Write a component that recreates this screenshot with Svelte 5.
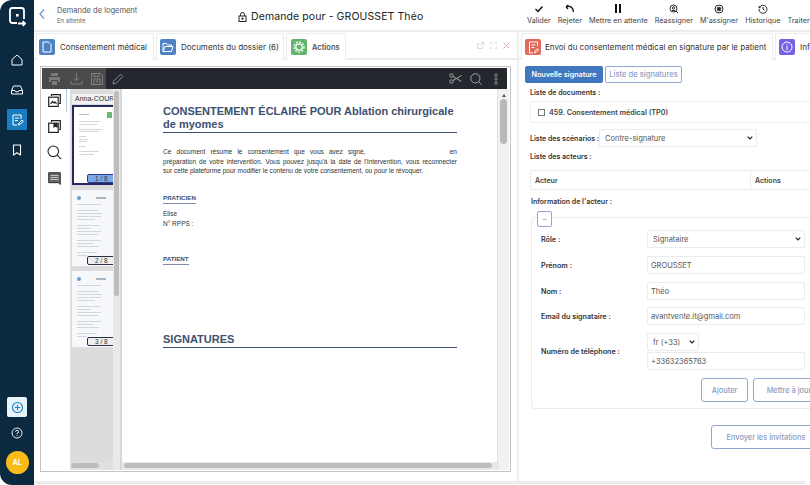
<script>
  const actions = [
    { label: 'Valider', icon: 'check' },
    { label: 'Rejeter', icon: 'undo' },
    { label: 'Mettre en attente', icon: 'pause' },
    { label: 'Réassigner', icon: 'search' },
    { label: "M'assigner", icon: 'target' },
    { label: 'Historique', icon: 'clock' },
    { label: 'Traiter', icon: 'none' }
  ];
  const firstLines = [70, 60, 0, 72, 68, 0, 22, 30, 26, 0, 24, 0, 68, 50];
  const lines = [70, 0, 62, 74, 70, 52, 0, 68, 40, 70, 62, 0, 72, 48, 66, 0, 58, 30];
  const thumbs = ['2 / 8', '3 / 8'];
</script>

<div class="app">
  <aside class="side">
    <div class="logo">
      <svg width="20" height="22" viewBox="0 0 20 22" fill="none" stroke="#fff" stroke-width="1.800"><path d="M10 17H5.500A2.500 2.500 0 0 1 3 14.500V4.500A2.500 2.500 0 0 1 5.500 2h9A2.500 2.500 0 0 1 17 4.500V13"/><path d="M11 17.500h7m-2.300-2.300 2.300 2.300-2.300 2.300"/><rect x="9" y="8" width="2.600" height="2.600" fill="#fff" stroke="none"/></svg>
    </div>
    <div class="nav">
      <span class="ni"><svg width="14" height="14" viewBox="0 0 14 14" fill="none" stroke="#fff" stroke-width="1"><path d="M2 6.500 7 2l5 4.500V12H2z" stroke-linejoin="round"/></svg></span>
      <span class="ni"><svg width="14" height="14" viewBox="0 0 14 14" fill="none" stroke="#fff" stroke-width="1"><path d="M3.500 3h7L12.500 7.500V11H1.500V7.500zM1.500 7.500h3.500l.8 1.300h2.400l.8-1.300h3.500" stroke-linejoin="round"/></svg></span>
      <span class="ni on"><svg width="13" height="14" viewBox="0 0 13 14" fill="none" stroke="#fff" stroke-width="1"><path d="M10 6V2H2v10h4M4 5h4M4 7.500h3"/><path d="m7.500 12 .5-2 3-3 1.300 1.300-3 3z"/></svg></span>
      <span class="ni"><svg width="12" height="14" viewBox="0 0 12 14" fill="none" stroke="#fff" stroke-width="1.100"><path d="M2.500 2h7v10L6 9.800 2.500 12z" stroke-linejoin="round"/></svg></span>
    </div>
    <div class="nav-bottom">
      <span class="plus"><svg width="13" height="13" viewBox="0 0 13 13" fill="none" stroke="#1c7fc0" stroke-width="1.100"><circle cx="6.500" cy="6.500" r="5"/><path d="M6.500 3.800v5.400M3.800 6.500h5.400"/></svg></span>
      <span class="help"><svg width="12" height="12" viewBox="0 0 12 12" fill="none" stroke="#fff" stroke-width=".9"><circle cx="6" cy="6" r="5"/><path d="M4.500 4.700A1.500 1.500 0 1 1 6 6.300v.8M6 8.200v.8"/></svg></span>
      <span class="avatar">AL</span>
    </div>
  </aside>

  <div class="main">
    <header class="top">
      <svg class="back" width="8" height="12" viewBox="0 0 8 12" fill="none" stroke="#6f9bd0" stroke-width="1.300"><path d="M6 1.500 2 6l4 4.500"/></svg>
      <div class="crumb">
        <div class="c1">Demande de logement</div>
        <div class="c2">En attente</div>
      </div>
      <div class="title">
        <svg width="9" height="10" viewBox="0 0 9 10" fill="none" stroke="#222" stroke-width="1"><rect x="1" y="4" width="7" height="5.500"/><path d="M2.500 4V2.500a2 2 0 0 1 4 0V4"/><circle cx="4.500" cy="6.700" r=".7" fill="#222"/></svg>
        <span>Demande pour - GROUSSET Théo</span>
      </div>
      <div class="acts">
        {#each actions as a}
          <div class="act">
            <span class="ai">
              {#if a.icon === 'check'}
                <svg width="10" height="8" viewBox="0 0 10 8" fill="none" stroke="#111" stroke-width="1.400"><path d="m1.500 4 2.500 2.500 4.500-5"/></svg>
              {:else if a.icon === 'undo'}
                <svg width="10" height="10" viewBox="0 0 10 10" fill="none" stroke="#111" stroke-width="1.200"><path d="M1.500 3c3-1.500 6.500-.5 7 5M1 2.800 3.300 1M1 2.800 3 5"/></svg>
              {:else if a.icon === 'pause'}
                <svg width="8" height="9" viewBox="0 0 8 9" fill="#111"><rect x="1" y="0" width="2" height="9"/><rect x="5" y="0" width="2" height="9"/></svg>
              {:else if a.icon === 'search'}
                <svg width="10" height="10" viewBox="0 0 10 10" fill="none" stroke="#111" stroke-width=".9"><circle cx="4.500" cy="4.500" r="3.500"/><circle cx="4.500" cy="4" r="1.200"/><path d="m7 7 2 2M3 6.500h3"/></svg>
              {:else if a.icon === 'target'}
                <svg width="10" height="10" viewBox="0 0 10 10" fill="none" stroke="#111" stroke-width=".9"><circle cx="5" cy="5" r="4"/><circle cx="5" cy="5" r="1.800"/><path d="m3.700 3.700 2.600 2.600m0-2.600L3.700 6.300"/></svg>
              {:else if a.icon === 'clock'}
                <svg width="10" height="10" viewBox="0 0 10 10" fill="none" stroke="#111" stroke-width=".9"><path d="M1.400 3.500A4 4 0 1 1 1 5M1 2v1.700h1.700M5 3v2.200l1.500.8"/></svg>
              {/if}
            </span>
            <span class="al">{a.label}</span>
          </div>
        {/each}
      </div>
    </header>

    <div class="panels">
      <section class="left">
        <div class="tabs">
          <div class="tab w1">
            <span class="ti blue"><svg width="10" height="12" viewBox="0 0 10 12" fill="none" stroke="#fff" stroke-width="1"><path d="M1 1h5.500L9 3.500V11H1z" stroke-linejoin="round"/></svg></span>
            <span>Consentement médical</span>
          </div>
          <div class="tab w2">
            <span class="ti blue"><svg width="12" height="11" viewBox="0 0 12 11" fill="none" stroke="#fff" stroke-width="1"><path d="M1 9.500V1.500h3.500l1 1.500h4v1.500M1 9.500 3 4.500h8L9.500 9.500z" stroke-linejoin="round"/></svg></span>
            <span>Documents du dossier (6)</span>
          </div>
          <div class="tab w3">
            <span class="ti green"><svg width="12" height="12" viewBox="0 0 12 12" fill="none" stroke="#fff" stroke-width="1.300"><circle cx="6" cy="6" r="3.200"/><circle cx="6" cy="6" r="5" stroke-dasharray="1.800 1.500"/></svg></span>
            <span class="b">Actions</span>
          </div>
          <div class="winctl">
            <svg width="7" height="7" viewBox="0 0 7 7" fill="none" stroke="#c6d3e6" stroke-width=".8"><path d="M5.500 4v2.500h-5v-5H3M4 .5h2.500V3M6.500.5 3.500 3.500"/></svg>
            <svg width="7" height="7" viewBox="0 0 7 7" fill="none" stroke="#d5dbe4" stroke-width=".8"><path d="M.5 2.500v-2h2M4.500.5h2v2M6.500 4.500v2h-2M2.500 6.500h-2v-2"/></svg>
            <svg width="7" height="7" viewBox="0 0 7 7" fill="none" stroke="#e9a8a8" stroke-width="1"><path d="m.5.500 6 6m0-6-6 6"/></svg>
          </div>
        </div>

        <div class="viewer">
          <div class="vbar">
            <div class="vgroup">
              <svg width="13" height="12" viewBox="0 0 13 12" fill="#7a7a7a"><path d="M3 0h7v3H3zM1 4h11v5h-2V7H3v2H1zM4 8h5v4H4z"/></svg>
              <svg width="13" height="12" viewBox="0 0 13 12" fill="none" stroke="#7d7d7d" stroke-width="1"><path d="M6.500 0v7.500M3.800 5l2.700 2.700L9.200 5M1 8v3h11V8"/></svg>
              <svg width="12" height="12" viewBox="0 0 12 12" fill="none" stroke="#808080" stroke-width="1"><path d="M.5.500h9l2 2v9H.500zM3 .5v3h5v-3"/><rect x="3" y="6" width="6" height="5.500"/><circle cx="6" cy="8.500" r=".8"/></svg>
            </div>
            <svg class="pen" width="12" height="12" viewBox="0 0 12 12" fill="none" stroke="#8b8b8f" stroke-width="1"><path d="M1 11l.7-3L8.500 1.200l2.300 2.300L4 10.300z" stroke-linejoin="round"/></svg>
            <div class="vright">
              <svg width="13" height="11" viewBox="0 0 13 11" fill="none" stroke="#aaa" stroke-width="1"><circle cx="2.500" cy="2.500" r="1.700"/><circle cx="2.500" cy="8.500" r="1.700"/><path d="M4 3.500 12.500 8.500M4 7.500 12.500 2.500"/></svg>
              <svg class="vs" width="12" height="12" viewBox="0 0 13 13" fill="none" stroke="#aaa" stroke-width="1"><circle cx="5.800" cy="5.800" r="5"/><path d="m9.500 9.500 3 3"/></svg>
              <svg class="vd" width="4" height="12" viewBox="0 0 4 12" fill="none" stroke="#8a8a8a" stroke-width="1"><circle cx="2" cy="2" r="1.200"/><circle cx="2" cy="6" r="1.200"/><circle cx="2" cy="10" r="1.200"/></svg>
            </div>
          </div>

          <div class="vbody">
            <div class="tools">
              <span class="mark"></span>
              <span class="tl"><svg width="13" height="13" viewBox="0 0 13 13" fill="none" stroke="#222" stroke-width="1.200"><path d="M3.500 2V.7h8.800v8.800H11"/><rect x=".7" y="3.200" width="9.500" height="9.200"/><path d="m2.500 10 2-2.500 1.500 1.500 1-1 1.500 2" /></svg></span>
              <span class="tl"><svg width="13" height="13" viewBox="0 0 13 13" fill="none" stroke="#222" stroke-width="1.200"><path d="M3.500 2V.7h8.800v8.800H11"/><rect x=".7" y="3.200" width="9.500" height="9.200"/><path d="M6 3.200v3.800l1.500-1 1.500 1V3.200" fill="#222"/></svg></span>
              <span class="tl"><svg width="15" height="15" viewBox="0 0 15 15" fill="none" stroke="#222" stroke-width="1.100"><circle cx="6.300" cy="6.300" r="5.300"/><path d="m10.200 10.200 4 4"/></svg></span>
              <span class="tl"><svg width="13" height="13" viewBox="0 0 13 13" fill="#666" stroke="#222" stroke-width=".9"><path d="M.7.700h11.600v11.800l-1.800-1.800H.7z"/><path d="M2.500 3.500h8M2.500 5.500h8M2.500 7.500h8" stroke="#ccc"/></svg></span>
            </div>

            <div class="thumbs">
              <div class="tscroll">
                <div class="tname">Anna-COUR</div>
                <div class="thumb first">
                  <div class="mhead"><em class="grey"></em><u class="gm"></u></div>
                  <div class="mini">
                    {#each firstLines as w}<i style="width:{w}%"></i>{/each}
                  </div>
                  <span class="pg active">1 / 8</span>
                </div>
                {#each thumbs as t}
                  <div class="thumb">
                    <div class="mhead"><em></em><u></u></div>
                    <div class="mini dense">
                      {#each lines as w}<i style="width:{w}%"></i>{/each}
                    </div>
                    <span class="pg">{t}</span>
                  </div>
                {/each}
              </div>
              <div class="tbar"><b></b></div>
              <div class="hbar"><b></b></div>
            </div>

            <div class="page">
              <div class="sheet">
                <h1>CONSENTEMENT ÉCLAIRÉ POUR Ablation chirurgicale de myomes</h1>
                <div class="para">
                  <span class="ln">Ce document résume le consentement que vous avez signé, <span class="gap"></span> en</span>
                  <span class="ln">préparation de votre intervention. Vous pouvez jusqu'à la date de l'intervention, vous reconnecter</span>
                  <span class="ln end">sur cette plateforme pour modifier le contenu de votre consentement, ou pour le révoquer.</span>
                </div>
                <h2 class="h-prat">PRATICIEN</h2>
                <p class="who">Elise<br />N° RPPS :</p>
                <h2 class="h-pat">PATIENT</h2>
                <h1 class="sig">SIGNATURES</h1>
              </div>
              <div class="hbar2"><b></b></div>
            </div>
            <div class="vscroll"><span class="up"></span><b></b></div>
          </div>
        </div>
      </section>

      <section class="right">
        <div class="tabs rtabs">
          <div class="tab w4">
            <span class="ti red"><svg width="11" height="13" viewBox="0 0 11 13" fill="none" stroke="#fff" stroke-width="1"><path d="M9.500 5V1h-8v11H5M3.500 4h4M3.500 6.500h3"/><path d="m6.500 12 .4-1.800 2.600-2.600 1.200 1.200-2.600 2.600z"/></svg></span>
            <span>Envoi du consentement médical en signature par le patient</span>
          </div>
          <div class="tab w5">
            <span class="ti violet"><svg width="12" height="12" viewBox="0 0 12 12" fill="none" stroke="#fff" stroke-width="1"><circle cx="6" cy="6" r="5"/><path d="M6 5v4M6 3v1"/></svg></span>
            <span>Informations</span>
          </div>
        </div>
        <div class="form">
          <div class="btnrow">
            <button class="primary">Nouvelle signature</button>
            <button class="outline">Liste de signatures</button>
          </div>
          <div class="lbl doclbl">Liste de documents :</div>
          <div class="docbox"><span class="cb"></span><span class="dn">459. Consentement médical (TP0)</span></div>
          <div class="scen">
            <span class="lbl">Liste des scénarios :</span>
            <div class="sel s-scen"><span>Contre-signature</span><svg width="6" height="4" viewBox="0 0 6 4" fill="none" stroke="#222" stroke-width="1.200"><path d="m.7.700 2.300 2.300L5.300.7"/></svg></div>
          </div>
          <div class="lbl actlbl">Liste des acteurs :</div>
          <div class="table"><span class="c-a">Acteur</span><span class="c-b">Actions</span></div>
          <div class="lbl infolbl">Information de l'acteur :</div>
          <div class="fs">
            <button class="toggle">–</button>
            <div class="row r1">
              <span class="rl">Rôle :</span>
              <div class="sel s-full"><span>Signataire</span><svg width="6" height="4" viewBox="0 0 6 4" fill="none" stroke="#222" stroke-width="1.200"><path d="m.7.700 2.300 2.300L5.300.7"/></svg></div>
            </div>
            <div class="row"><span class="rl">Prénom :</span><div class="inp">GROUSSET</div></div>
            <div class="row"><span class="rl">Nom :</span><div class="inp">Théo</div></div>
            <div class="row r-mail"><span class="rl">Email du signataire :</span><div class="inp">avantvente.it@gmail.com</div></div>
            <div class="row tel">
              <span class="rl">Numéro de téléphone :</span>
              <div class="telcol">
                <div class="sel s-tel"><span>fr (+33)</span><svg width="6" height="4" viewBox="0 0 6 4" fill="none" stroke="#222" stroke-width="1.200"><path d="m.7.700 2.300 2.300L5.300.7"/></svg></div>
                <div class="inp">+33632365763</div>
              </div>
            </div>
            <div class="fsbtns">
              <button class="ghost b-add">Ajouter</button>
              <button class="ghost b-upd">Mettre à jour</button>
            </div>
          </div>
          <div class="send"><button class="ghost b-send">Envoyer les invitations</button></div>
        </div>
      </section>
    </div>
    <div class="foot"></div>
  </div>
</div>

<style>
  :global(body) { margin: 0; background: #fff; }
  * { box-sizing: border-box; }
  .app {
    width: 810px; height: 485px; display: flex; overflow: hidden; background: #fff;
    font-family: Inter, "Noto Sans", sans-serif; color: #333;
  }
  .side {
    width: 34px; height: 485px; background: #0b2a3f; border-radius: 12px 0 0 12px;
    display: flex; flex-direction: column; align-items: center; flex: none;
  }
  .logo { margin-top: 6px; height: 22px; }
  .nav { margin-top: 21px; display: flex; flex-direction: column; gap: 9px; align-items: center; }
  .ni { width: 20px; height: 21px; display: flex; align-items: center; justify-content: center; }
  .ni.on { background: #1a7cc0; }
  .nav-bottom { margin-top: auto; margin-bottom: 12px; display: flex; flex-direction: column; align-items: center; }
  .plus { width: 20px; height: 20px; background: #e8f4fc; border-radius: 2px; display: flex; align-items: center; justify-content: center; }
  .help { margin-top: 10px; height: 12px; display: flex; }
  .avatar {
    margin-top: 12px; width: 23px; height: 23px; border-radius: 50%; background: #f9bb16; margin-bottom: -1px;
    color: #fff; font-size: 7px; font-weight: 700; display: flex; align-items: center; justify-content: center;
  }
  .main { flex: 1; min-width: 0; display: flex; flex-direction: column; }
  .top { height: 32px; display: flex; align-items: flex-start; border-bottom: 2px solid #ececec; flex: none; }
  .back { margin: 8px 0 0 4px; flex: none; }
  .crumb { margin-left: 11px; width: 170px; flex: none; padding-top: 6px; }
  .c1 { font-size: 7.500px; line-height: 9px; color: #555; white-space: nowrap; }
  .c2 { font-size: 6px; line-height: 8px; margin-top: 2px; color: #666; }
  .title { width: 289px; flex: none; display: flex; align-items: center; gap: 4px; margin-top: 10px; margin-left: 11px; font-size: 10.500px; color: #222; white-space: nowrap; letter-spacing: .1px; }
  .acts { display: flex; gap: 7px; flex: none; }
  .act { display: flex; flex-direction: column; align-items: center; padding-top: 3px; }
  .ai { height: 11px; display: flex; align-items: center; }
  .al { font-size: 7.300px; line-height: 9px; margin-top: 2px; white-space: nowrap; color: #444; }

  .panels { flex: 1; min-height: 0; display: flex; }
  .left { width: 485px; flex: none; border-right: 2px solid #ececec; display: flex; flex-direction: column; }
  .right { flex: 1; min-width: 0; overflow: hidden; }
  .tabs { height: 28px; background: #fff; border-bottom: 2px solid #ececec; display: flex; align-items: flex-end; padding-left: 2px; gap: 2px; flex: none; }
  .tab {
    height: 27px; display: flex; align-items: center; gap: 5px; padding-left: 3px; font-size: 8px; color: #333;
    border: 1px solid #ececec; border-bottom: none; border-radius: 2px 2px 0 0; white-space: nowrap; background: #fff; margin-bottom: -2px; flex: none;
  }
  .tab .b { font-weight: 600; color: #555; font-size: 7.500px; }
  .w1 { width: 118px; padding-left: 2px; }
  .w2 { width: 128px; }
  .w3 { width: 60px; padding-left: 4px; }
  .ti { width: 16px; height: 16px; border-radius: 2px; display: flex; align-items: center; justify-content: center; flex: none; }
  .blue { background: #4d82c3; }
  .green { background: #62b56d; }
  .red { background: #e0695a; }
  .violet { background: #7461e3; }
  .winctl { margin-left: auto; margin-right: 7px; display: flex; gap: 6px; align-self: center; }

  .viewer { margin: 6px 0 0 6px; width: 471px; height: 406px; border: 1px solid #c4c4c4; padding: 1px; display: flex; flex-direction: column; }
  .vbar { height: 21px; background: #25272f; display: flex; align-items: center; flex: none; margin-right: 2px; }
  .vgroup { width: 64px; height: 100%; background: #4a4a4a; display: flex; align-items: center; justify-content: space-between; padding: 0 3px 0 6px; }
  .pen { margin-left: 6px; }
  .vright { margin-left: auto; display: flex; align-items: center; padding-right: 9px; }
  .vs { margin-left: 8px; }
  .vd { margin-left: 12px; }
  .vbody { flex: 1; min-height: 0; display: flex; background: #d8d8d8; }
  .tools { width: 28px; flex: none; display: flex; flex-direction: column; align-items: center; padding: 3px 3px 0 0; gap: 10px; position: relative; background: #fff; }
  .mark { position: absolute; right: 3px; top: 0; width: 1px; height: 23px; background: #b9cbe2; }
  .tl { height: 16px; display: flex; align-items: center; justify-content: center; }
  .thumbs { width: 50px; flex: none; background: #dcdcdc; position: relative; overflow: hidden; }
  .tscroll { width: 43px; overflow: hidden; background: #dcdcdc; padding-top: 5px; height: 100%; }
  .tname { font-family: "Liberation Sans", sans-serif; font-size: 7px; line-height: 10px; background: #f2f2f2; padding-left: 3px; margin-left: 2px; white-space: nowrap; height: 10px; margin-bottom: 1px; color: #333; }
  .thumb { width: 60px; margin: 0 0 5px 2px; height: 76px; background: #f6f8fc; padding: 5px 3px; position: relative; overflow: hidden; }
  .thumb.first { height: 80px; background: #fff; border: 2px solid #27285e; }
  .mhead { display: flex; align-items: center; gap: 3px; height: 5px; margin-bottom: 4px; padding-left: 2px; }
  .mhead em { width: 4px; height: 4px; border-radius: 50%; background: #6d9ecb; }
  .mhead em.grey { width: 10px; height: 1px; border-radius: 0; background: #bbb; }
  .mhead u { width: 10px; height: 2px; background: #a9b6c4; margin-left: 12px; }
  .mhead u.gm { width: 5px; height: 6px; background: #6eb77a; margin-left: 15px; }
  .mini { display: flex; flex-direction: column; gap: 1.500px; padding: 0 18px 0 2px; }
  .mini i { display: block; height: 1px; background: #d2d6dd; }
  .dense { gap: 2px; }
  .pg {
    position: absolute; left: 15px; bottom: 1px; width: 36px; height: 9px; border: 1px solid #2e2e45; border-radius: 2px; background: #eee;
    font-family: "Liberation Sans", sans-serif; font-size: 6.500px; line-height: 7px; padding-left: 7px; color: #333;
  }
  .pg.active { background: #7ea7e8; border-color: #2b3a8a; bottom: 0; left: 13px; }
  .tbar { position: absolute; right: 0; top: 0; bottom: 0; width: 7px; background: #e9e9e9; }
  .tbar b { display: block; margin: 2px 1px 0; height: 205px; background: #bdbdbd; border-radius: 3px; }
  .hbar { position: absolute; left: 0; right: 7px; bottom: 0; height: 8px; background: #e0e0e0; }
  .hbar b { display: block; margin: 1px 0 0 1px; width: 28px; height: 5px; background: #bdbdbd; border-radius: 3px; }
  .page { flex: 1; min-width: 0; margin-left: 2px; background: #fff; display: flex; flex-direction: column; }
  .sheet { flex: 1; padding: 16px 40px 0 41px; font-family: "Liberation Sans", sans-serif; }
  h1 { margin: 0; font-size: 11px; line-height: 13px; font-weight: 700; color: #3c5070; border-bottom: 1.500px solid #3c5070; padding-bottom: 1px; }
  .para { margin: 14px 0 0; font-size: 6.550px; line-height: 9.600px; color: #333; }
  .ln { display: block; white-space: nowrap; text-align: justify; text-align-last: justify; }
  .ln.end { text-align-last: left; }
  .gap { display: inline-block; width: 74px; }
  h2 { margin: 0; font-size: 6.200px; line-height: 8px; font-weight: 700; color: #3c5070; border-bottom: 1px solid #7d8ba3; padding-bottom: 1px; }
  .h-prat { width: 33px; margin-top: 18px; }
  .who { margin: 5px 0 0; font-size: 6.500px; line-height: 10px; color: #333; }
  .h-pat { width: 26px; margin-top: 26px; }
  .sig { margin-top: 68px; }
  .hbar2 { height: 8px; background: #e8e8e8; flex: none; }
  .hbar2 b { display: block; margin: 1px 0 0 2px; height: 5px; width: 368px; background: #bdbdbd; border-radius: 3px; }
  .vscroll { width: 12px; flex: none; background: #f1f1f1; border-left: 1px solid #e0e0e0; padding: 0 2px; }
  .up { display: block; width: 0; height: 0; margin: 5px auto 0; border: 2px solid transparent; border-bottom: 3px solid #555; border-top: 0; }
  .vscroll b { display: block; height: 45px; margin-top: 2px; background: #b9b9b9; border-radius: 4px; }

  .rtabs { padding-left: 2px; }
  .w4 { width: 252px; gap: 4px; padding-left: 3px; }
  .w5 { width: 60px; }
  .form { padding: 6px 0 0 6px; width: 321px; font-size: 7px; }
  .btnrow { display: flex; gap: 2px; }
  button { font-family: inherit; font-size: 7.200px; font-weight: 600; border-radius: 2px; padding: 0; background: #fff; }
  .primary { width: 78px; height: 17px; background: #3f78be; border: 1px solid #3f78be; color: #fff; }
  .outline { width: 77px; height: 17px; border: 1px solid #8ea9cd; color: #8ea0c4; font-size: 7.600px; font-weight: 500; }
  .lbl { font-weight: 600; font-size: 7px; line-height: 9px; color: #333; white-space: nowrap; }
  .doclbl { margin: 5px 0 0 5px; }
  .docbox { margin: 4px 0 0 5px; height: 22px; border: 1px solid #eceff3; border-radius: 2px; display: flex; align-items: center; padding-left: 7px; gap: 4px; font-weight: 600; color: #444; font-size: 7.200px; width: 310px; }
  .cb { width: 7px; height: 7px; border: 1px solid #777; flex: none; }
  .scen { margin: 6px 0 0 5px; display: flex; align-items: center; gap: 2px; }
  .scen .lbl { width: 67px; }
  .sel { height: 18px; border: 1px solid #e8ebf0; border-radius: 2px; background: #fff; display: flex; align-items: center; justify-content: space-between; padding: 0 3px 0 5px; color: #555; font-size: 7.500px; }
  .s-scen { width: 158px; }
  .actlbl { margin: 5px 0 0 5px; }
  .table { margin: 9px 0 0 5px; height: 20px; width: 310px; border: 1px solid #e8ebf0; display: flex; align-items: center; font-weight: 600; color: #444; }
  .c-a { width: 220px; padding-left: 4px; height: 100%; display: flex; align-items: center; border-right: 1px solid #e8ebf0; }
  .c-b { padding-left: 4px; }
  .infolbl { margin: 7px 0 0 6px; }
  .fs { margin: 11px 0 0 6px; width: 310px; height: 192px; border: 1px solid #e8ebf0; border-radius: 4px; padding: 0 0 0 9px; }
  .toggle { display: block; width: 15px; height: 16px; margin: -7px 0 0 -4px; border: 1px solid #8ea9cd; color: #889; font-weight: 400; position: relative; }
  .row { display: flex; align-items: center; height: 18px; margin-top: 8px; }
  .r1 { margin-top: 3px; }
  .r-mail { margin-top: 7px; }
  .rl { width: 106px; flex: none; font-weight: 600; color: #333; font-size: 7.200px; white-space: nowrap; }
  .s-full { width: 158px; }
  .inp { width: 158px; height: 18px; border: 1px solid #e8ebf0; border-radius: 2px; display: flex; align-items: center; padding-left: 3px; font-size: 7.500px; color: #555; }
  .tel { height: 37px; margin-top: 8px; }
  .telcol { display: flex; flex-direction: column; gap: 1px; }
  .s-tel { width: 52px; }
  .fsbtns { display: flex; gap: 5px; margin: 8px 0 0 160px; }
  .ghost { height: 24px; border: 1px solid #8ea9cd; color: #8a9bbd; background: #fff; font-size: 7.400px; font-weight: 500; border-radius: 3px; }
  .b-add { width: 47px; }
  .b-upd { width: 72px; flex: none; }
  .send { margin: 16px 0 0 186px; }
  .b-send { width: 110px; }
  .foot { height: 3px; margin: 0 4px 1px 0; background: #ececec; flex: none; }
</style>
